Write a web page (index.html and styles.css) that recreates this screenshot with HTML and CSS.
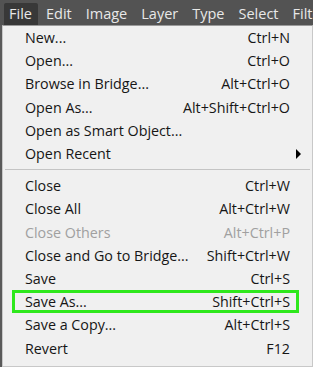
FILE: index.html
```html
<!DOCTYPE html>
<html lang="en">
<head>
    <meta charset="UTF-8">
    <title>File menu</title>
    <link rel="stylesheet" href="styles.css">
</head>
<body>
    <div class="menubar">
        <span class="top active">File</span>
        <span class="top">Edit</span>
        <span class="top">Image</span>
        <span class="top">Layer</span>
        <span class="top">Type</span>
        <span class="top">Select</span>
        <span class="top">Filter</span>
    </div>
    <div class="menu">
        <div class="item"><span>New...</span><span>Ctrl+N</span></div>
        <div class="item"><span>Open...</span><span>Ctrl+O</span></div>
        <div class="item"><span>Browse in Bridge...</span><span>Alt+Ctrl+O</span></div>
        <div class="item"><span>Open As...</span><span>Alt+Shift+Ctrl+O</span></div>
        <div class="item"><span>Open as Smart Object...</span><span></span></div>
        <div class="item"><span>Open Recent</span><span class="arrow"></span></div>
        <div class="sep"></div>
        <div class="item"><span>Close</span><span>Ctrl+W</span></div>
        <div class="item"><span>Close All</span><span>Alt+Ctrl+W</span></div>
        <div class="item disabled"><span>Close Others</span><span>Alt+Ctrl+P</span></div>
        <div class="item"><span>Close and Go to Bridge...</span><span>Shift+Ctrl+W</span></div>
        <div class="item"><span>Save</span><span>Ctrl+S</span></div>
        <div class="item marked"><span>Save As...</span><span>Shift+Ctrl+S</span></div>
        <div class="item"><span>Save a Copy...</span><span>Alt+Ctrl+S</span></div>
        <div class="item"><span>Revert</span><span>F12</span></div>
    </div>
</body>
</html>
```
FILE: styles.css
```css
body {
    margin: 0;
    width: 313px;
    height: 367px;
    overflow: hidden;
    background: #5a5a5a;
    font-family: "Open Sans", "Noto Sans", sans-serif;
    font-size: 14.3px;
}

.menubar {
    height: 25px;
    background: #535353;
    display: flex;
    align-items: flex-end;
    padding-left: 4px;
    white-space: nowrap;
    overflow: hidden;
    color: #e8e8e8;
    font-size: 14.5px;
}

.top {
    height: 22px;
    line-height: 21px;
    padding: 0 6px 0 5px;
    margin-right: 3px;
}

.top.active {
    background: #383838;
    border-radius: 2px 2px 0 0;
}

.menu {
    margin-left: 2px;
    background: #f0f0f0;
    border: 1px solid #c8c8c8;
    border-top: 1px solid #9a9a9a;
    padding: 0 0 6px 0;
    color: #161616;
}

.item {
    display: flex;
    justify-content: space-between;
    align-items: center;
    height: 23.2px;
    padding: 0 19px 0 19px;
    border: 3px solid transparent;
    box-sizing: border-box;
    white-space: nowrap;
}

.item.disabled {
    color: #a0a0a0;
}

.item.marked {
    border-color: #2ee81c;
    margin-left: 9px;
    margin-right: 13px;
    padding-left: 10px;
    padding-right: 6px;
}

.arrow {
    width: 0;
    height: 0;
    border-top: 5px solid transparent;
    border-bottom: 5px solid transparent;
    border-left: 5px solid #000;
    margin-right: -11px;
}

.sep {
    height: 1px;
    background: #c4c4c4;
    margin: 4px 2px 4px 2px;
}
```
